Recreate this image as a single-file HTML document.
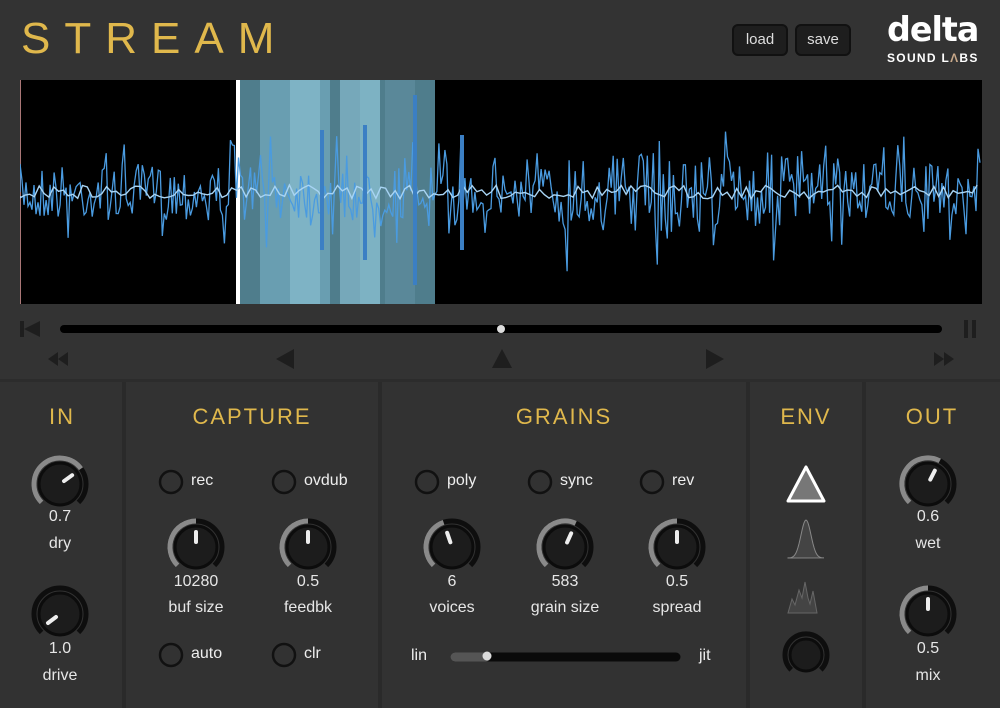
<!DOCTYPE html>
<html><head><meta charset="utf-8">
<style>
*{margin:0;padding:0;box-sizing:border-box}
body{width:1000px;height:708px;background:#333;overflow:hidden;position:relative;font-family:"Liberation Sans","DejaVu Sans",sans-serif;color:#eee}
.t{position:absolute;white-space:nowrap}
#title{left:21px;top:14px;font-size:44px;letter-spacing:14px;color:#e0b84c;font-weight:normal}
.btn{position:absolute;top:24px;height:32px;background:#1e1e1e;border:2px solid #111;border-radius:6px;color:#ddd;font-size:15px;text-align:center;line-height:28px}
.hd{position:absolute;top:404px;font-size:22px;letter-spacing:2px;color:#e0b84c;text-align:center}
.lbl{position:absolute;font-size:16px;color:#e6e6e6;text-align:center;transform:translateX(-50%)}
</style></head><body>
<div id="title" class="t">STREAM</div>
<div class="btn" style="left:732px;width:56px">load</div>
<div class="btn" style="left:795px;width:56px">save</div>
<div class="t" style="left:887px;top:10px;font-size:34px;font-weight:bold;color:#fff;letter-spacing:-1px;line-height:40px;font-family:'DejaVu Sans',sans-serif;transform:scaleX(0.98);transform-origin:left">delta</div>
<div class="t" style="left:887px;top:51px;font-size:12px;font-weight:bold;color:#fff;letter-spacing:1.3px">SOUND L<span style="color:#c9a98a">Λ</span>BS</div>

<svg id="wave" style="position:absolute;left:20px;top:80px" width="962" height="224"></svg>
<svg id="ctl" style="position:absolute;left:0;top:0" width="1000" height="708"></svg>

<div class="hd" style="left:0;width:124px">IN</div>
<div class="hd" style="left:124px;width:256px">CAPTURE</div>
<div class="hd" style="left:380px;width:368px">GRAINS</div>
<div class="hd" style="left:748px;width:116px">ENV</div>
<div class="hd" style="left:864px;width:136px">OUT</div>

<div class="lbl" style="left:60px;top:508px">0.7</div><div class="lbl" style="left:60px;top:535px">dry</div>
<div class="lbl" style="left:60px;top:640px">1.0</div><div class="lbl" style="left:60px;top:667px">drive</div>
<div class="lbl" style="left:196px;top:573px">10280</div><div class="lbl" style="left:196px;top:599px">buf size</div>
<div class="lbl" style="left:308px;top:573px">0.5</div><div class="lbl" style="left:308px;top:599px">feedbk</div>
<div class="lbl" style="left:452px;top:573px">6</div><div class="lbl" style="left:452px;top:599px">voices</div>
<div class="lbl" style="left:565px;top:573px">583</div><div class="lbl" style="left:565px;top:599px">grain size</div>
<div class="lbl" style="left:677px;top:573px">0.5</div><div class="lbl" style="left:677px;top:599px">spread</div>
<div class="lbl" style="left:928px;top:508px">0.6</div><div class="lbl" style="left:928px;top:535px">wet</div>
<div class="lbl" style="left:928px;top:640px">0.5</div><div class="lbl" style="left:928px;top:667px">mix</div>
<div class="t" style="left:191px;top:472px;font-size:16px">rec</div>
<div class="t" style="left:304px;top:472px;font-size:16px">ovdub</div>
<div class="t" style="left:447px;top:472px;font-size:16px">poly</div>
<div class="t" style="left:560px;top:472px;font-size:16px">sync</div>
<div class="t" style="left:672px;top:472px;font-size:16px">rev</div>
<div class="t" style="left:191px;top:645px;font-size:16px">auto</div>
<div class="t" style="left:304px;top:645px;font-size:16px">clr</div>
<div class="t" style="left:411px;top:647px;font-size:16px">lin</div>
<div class="t" style="left:699px;top:647px;font-size:16px">jit</div>

<script>
var S='http://www.w3.org/2000/svg';
function el(p,t,a){var e=document.createElementNS(S,t);for(var k in a)e.setAttribute(k,a[k]);p.appendChild(e);return e}
var seed=7;function rnd(){seed=(seed*16807)%2147483647;return seed/2147483647}
var w=document.getElementById('wave');
el(w,'rect',{x:0,y:0,width:962,height:224,fill:'#000'});
el(w,'rect',{x:218,y:0,width:197,height:224,fill:'#4f7d8c'});
[[260,70,'#6fa6ba'],[340,40,'#7fb3c6'],[290,30,'#83b8cb'],[385,30,'#5d8b9c'],[360,20,'#80b4c6']].forEach(function(s){el(w,'rect',{x:s[0]-20,y:0,width:s[1],height:224,fill:s[2],opacity:.8})});
el(w,'rect',{x:216,y:0,width:4,height:224,fill:'#fff'});
el(w,'rect',{x:0,y:0,width:1,height:224,fill:'#a77'});
var d='M0 112',n=480;
for(var i=0;i<n;i++){var x=i*962/n;var amp=(x>530&&x<780)?40:28;var a=(rnd()-.5)*2*amp*(rnd()<.18?2:1);d+=' L'+x.toFixed(1)+' '+(112+a).toFixed(1)}
el(w,'path',{d:d,stroke:'#4a9be0',fill:'none','stroke-width':1.3});
var d2='M0 116';for(var i=0;i<200;i++){d2+=' L'+(i*962/200).toFixed(1)+' '+(112+(rnd()-.5)*14).toFixed(1)}
el(w,'path',{d:d2,stroke:'#a8d4f4',fill:'none','stroke-width':1.4});
[[302,50,170],[345,45,180],[395,15,205],[442,55,170]].forEach(function(b){el(w,'rect',{x:b[0]-2,y:b[1],width:4,height:b[2]-b[1],fill:'#3b7fc4'})});

var c=document.getElementById('ctl');
el(c,'rect',{x:0,y:382,width:1000,height:326,fill:'#323232'});
[124,380,748,864].forEach(function(x){el(c,'rect',{x:x-2,y:382,width:4,height:326,fill:'#2a2a2a'})});
el(c,'rect',{x:0,y:379,width:1000,height:3,fill:'#2c2c2c'});
el(c,'line',{x1:64,y1:329,x2:938,y2:329,stroke:'#000','stroke-width':8,'stroke-linecap':'round'});
el(c,'circle',{cx:501,cy:329,r:4,fill:'#ddd'});
el(c,'rect',{x:20,y:321,width:4,height:16,fill:'#1e1e1e'});
el(c,'path',{d:'M24 329 L40 321 L40 337 Z',fill:'#1e1e1e'});
el(c,'rect',{x:964,y:320,width:4,height:18,fill:'#1e1e1e'});el(c,'rect',{x:972,y:320,width:4,height:18,fill:'#1e1e1e'});
el(c,'path',{d:'M48 359 L58 352 L58 366Z M58 359 L68 352 L68 366Z',fill:'#1e1e1e'});
el(c,'path',{d:'M276 359 L294 349 L294 369Z',fill:'#1e1e1e'});
el(c,'path',{d:'M502 349 L512 368 L492 368Z',fill:'#1e1e1e'});
el(c,'path',{d:'M724 359 L706 349 L706 369Z',fill:'#1e1e1e'});
el(c,'path',{d:'M954 359 L944 352 L944 366Z M944 359 L934 352 L934 366Z',fill:'#1e1e1e'});
function arc(cx,cy,r,a0,a1){function p(a){a=(a-90)*Math.PI/180;return [cx+r*Math.cos(a),cy+r*Math.sin(a)]}var s=p(a0),e=p(a1);var lg=(a1-a0)>180?1:0;return 'M'+s[0].toFixed(1)+' '+s[1].toFixed(1)+' A'+r+' '+r+' 0 '+lg+' 1 '+e[0].toFixed(1)+' '+e[1].toFixed(1)}
function knob(cx,cy,v,grey){var ang=-135+v*270;
el(c,'path',{d:arc(cx,cy,26,-135,135),stroke:'#0e0e0e',fill:'none','stroke-width':5});
if(grey&&v>0.01)el(c,'path',{d:arc(cx,cy,26,-135,ang),stroke:'#8a8a8a',fill:'none','stroke-width':5});
el(c,'circle',{cx:cx,cy:cy,r:21,fill:'#1c1c1c',stroke:'#0c0c0c','stroke-width':3});
var a=(ang-90)*Math.PI/180;
el(c,'line',{x1:cx+5*Math.cos(a),y1:cy+5*Math.sin(a),x2:cx+15*Math.cos(a),y2:cy+15*Math.sin(a),stroke:'#eee','stroke-width':4,'stroke-linecap':'round'})}
knob(60,484,.7,1);knob(60,614,.03,0);knob(196,547,.5,1);knob(308,547,.5,1);
knob(452,547,.43,1);knob(565,547,.59,1);knob(677,547,.5,1);knob(928,484,.6,1);knob(928,614,.5,1);
[[171,482],[284,482],[427,482],[540,482],[652,482],[171,655],[284,655]].forEach(function(p){el(c,'circle',{cx:p[0],cy:p[1],r:11,fill:'none',stroke:'#111','stroke-width':2.5})});
el(c,'line',{x1:455,y1:657,x2:676,y2:657,stroke:'#0a0a0a','stroke-width':9,'stroke-linecap':'round'});
el(c,'line',{x1:455,y1:657,x2:486,y2:657,stroke:'#555','stroke-width':9,'stroke-linecap':'round'});
el(c,'circle',{cx:487,cy:656,r:4.5,fill:'#ddd'});
el(c,'path',{d:'M788 501 L806 467 L824 501Z',fill:'#777',stroke:'#fff','stroke-width':3,'stroke-linejoin':'round'});
var g='M788 558';for(var i=0;i<=36;i++){var x=788+i;var t=(x-806)/5;g+=' L'+x+' '+(558-38*Math.exp(-t*t/2)).toFixed(1)}
el(c,'path',{d:g+' Z',fill:'#444',stroke:'#888','stroke-width':1});
el(c,'path',{d:'M788 613 L792 599 L795 605 L799 590 L802 598 L805 582 L808 598 L810 604 L813 591 L817 613 Z',fill:'#444',stroke:'#666','stroke-width':1});
el(c,'path',{d:arc(806,655,21,-135,135),stroke:'#0e0e0e',fill:'none','stroke-width':5});
el(c,'circle',{cx:806,cy:655,r:16,fill:'#1c1c1c',stroke:'#0c0c0c','stroke-width':3});
</script>
</body></html>
